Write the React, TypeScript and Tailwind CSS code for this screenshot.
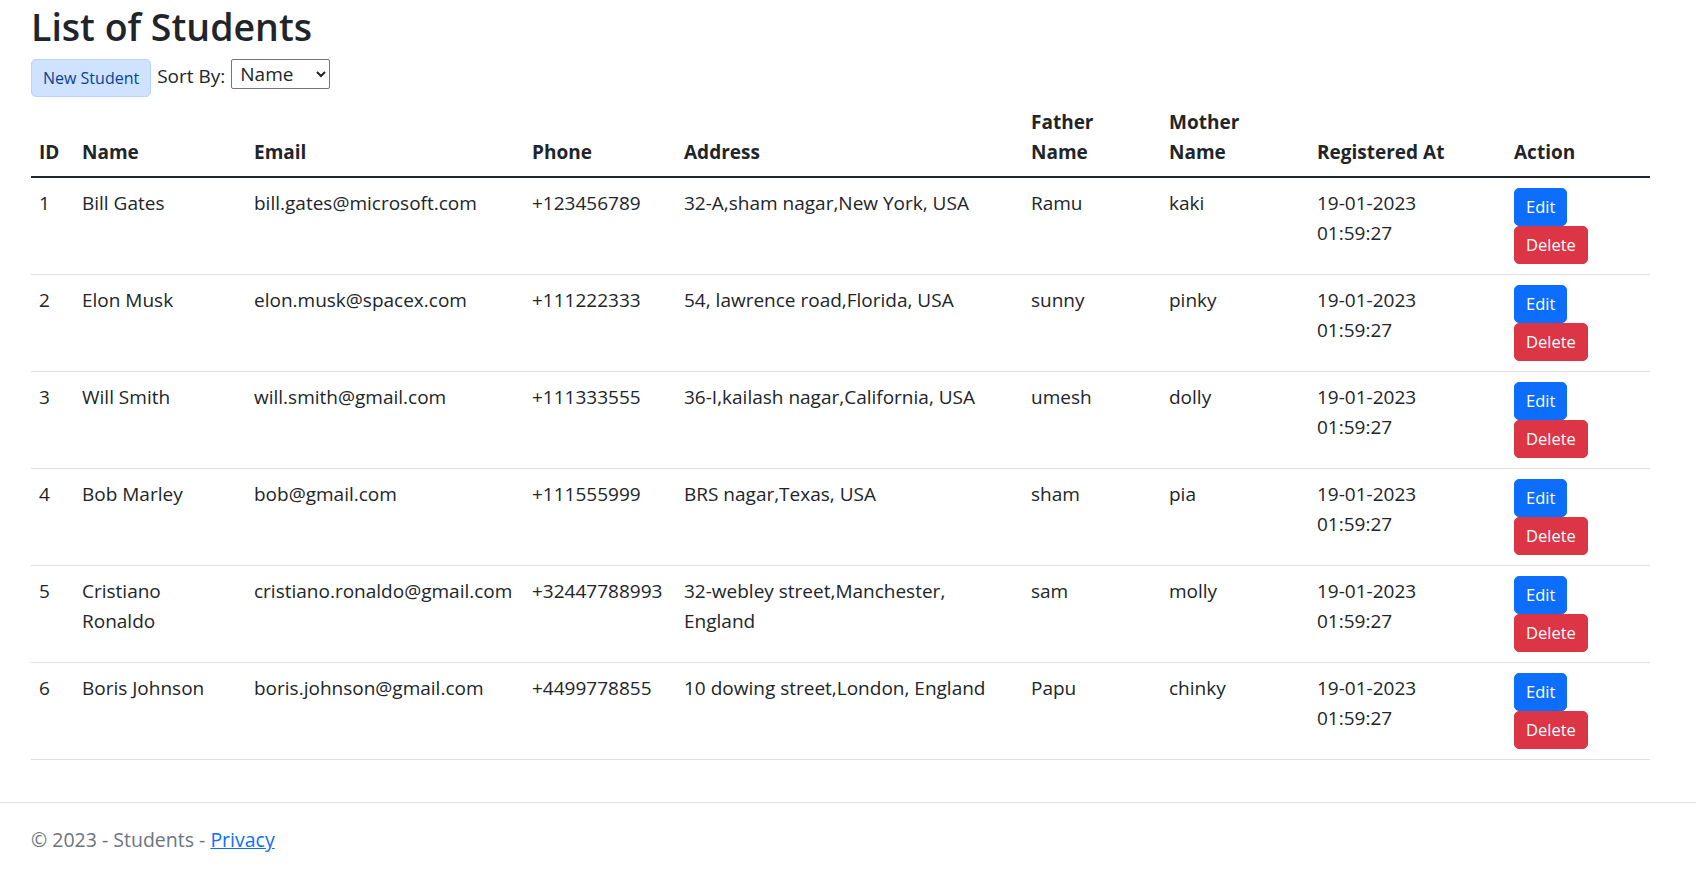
import React from 'react';

type Student = {
  id: number;
  name: string;
  email: string;
  phone: string;
  address: string;
  father: string;
  mother: string;
  registeredAt: string;
};

const students: Student[] = [
  { id: 1, name: 'Bill Gates', email: 'bill.gates@microsoft.com', phone: '+123456789', address: '32-A,sham nagar,New York, USA', father: 'Ramu', mother: 'kaki', registeredAt: '19-01-2023 01:59:27' },
  { id: 2, name: 'Elon Musk', email: 'elon.musk@spacex.com', phone: '+111222333', address: '54, lawrence road,Florida, USA', father: 'sunny', mother: 'pinky', registeredAt: '19-01-2023 01:59:27' },
  { id: 3, name: 'Will Smith', email: 'will.smith@gmail.com', phone: '+111333555', address: '36-I,kailash nagar,California, USA', father: 'umesh', mother: 'dolly', registeredAt: '19-01-2023 01:59:27' },
  { id: 4, name: 'Bob Marley', email: 'bob@gmail.com', phone: '+111555999', address: 'BRS nagar,Texas, USA', father: 'sham', mother: 'pia', registeredAt: '19-01-2023 01:59:27' },
  { id: 5, name: 'Cristiano Ronaldo', email: 'cristiano.ronaldo@gmail.com', phone: '+32447788993', address: '32-webley street,Manchester, England', father: 'sam', mother: 'molly', registeredAt: '19-01-2023 01:59:27' },
  { id: 6, name: 'Boris Johnson', email: 'boris.johnson@gmail.com', phone: '+4499778855', address: '10 dowing street,London, England', father: 'Papu', mother: 'chinky', registeredAt: '19-01-2023 01:59:27' }
];

const th = 'px-[8px] pt-[10px] pb-[9px] text-left font-bold align-bottom';
const td = 'px-[8px] pt-[10px] pb-[10px] align-top';

export default function App() {
  return (
    <div className="min-h-screen flex flex-col bg-white text-[#212529] font-['Open_Sans','Noto_Sans',sans-serif] text-[19px] leading-[30px]">
      <main className="flex-1 pl-[31px] pt-[3px]">
        <h1 className="text-[37.5px] font-semibold leading-[48px] mb-[8px]">List of Students</h1>

        <div className="flex items-start">
          <button
            type="button"
            className="h-[38px] px-[11px] text-[16px] leading-[24px] text-[#084298] bg-[#cfe2ff] border border-[#b6d4fe] rounded-[5px]"
          >
            New Student
          </button>
          <span className="ml-[6px] mt-[2px]">Sort By:</span>
          <select
            defaultValue="Name"
            className="ml-[6px] h-[30px] w-[99px] pl-[4px] text-[19px] leading-[24px] border border-[#767676] rounded-[2px] bg-white"
          >
            <option>Name</option>
            <option>Email</option>
            <option>Registered At</option>
          </select>
        </div>

        <table className="w-[1619px] table-fixed border-collapse mb-[16px]">
          <colgroup>
            <col className="w-[43px]" />
            <col className="w-[172px]" />
            <col className="w-[278px]" />
            <col className="w-[152px]" />
            <col className="w-[347px]" />
            <col className="w-[138px]" />
            <col className="w-[148px]" />
            <col className="w-[197px]" />
            <col className="w-[144px]" />
          </colgroup>
          <thead>
            <tr className="border-b-2 border-[#212529]">
              <th className={th}>ID</th>
              <th className={th}>Name</th>
              <th className={th}>Email</th>
              <th className={th}>Phone</th>
              <th className={th}>Address</th>
              <th className={th}><div className="max-w-[100px]">Father Name</div></th>
              <th className={th}><div className="max-w-[100px]">Mother Name</div></th>
              <th className={th}>Registered At</th>
              <th className={th}>Action</th>
            </tr>
          </thead>
          <tbody>
            {students.map((s) => (
              <tr key={s.id} className="border-b border-[#dee2e6]">
                <td className={td}>{s.id}</td>
                <td className={td}><div className="max-w-[140px]">{s.name}</div></td>
                <td className={`${td} whitespace-nowrap`}>{s.email}</td>
                <td className={`${td} whitespace-nowrap`}>{s.phone}</td>
                <td className={td}><div className="max-w-[316px]">{s.address}</div></td>
                <td className={td}>{s.father}</td>
                <td className={td}>{s.mother}</td>
                <td className={td}><div className="max-w-[150px]">{s.registeredAt}</div></td>
                <td className={`${td} pb-[10.4px]`}>
                  <div className="flex flex-col items-start">
                    <button type="button" className="h-[38px] px-[11px] text-[16.5px] leading-[24px] text-white bg-[#0d6efd] border border-[#0d6efd] rounded-[5px]">
                      Edit
                    </button>
                    <button type="button" className="h-[38px] px-[11px] text-[16.5px] leading-[24px] text-white bg-[#dc3545] border border-[#dc3545] rounded-[5px]">
                      Delete
                    </button>
                  </div>
                </td>
              </tr>
            ))}
          </tbody>
        </table>
      </main>

      <footer className="h-[70px] border-t border-[#dee2e6] pl-[31px] pt-[22px] text-[19.5px] text-[#6c757d]">
        © 2023 - Students - <a href="#" className="text-[#0d6efd] underline">Privacy</a>
      </footer>
    </div>
  );
}
